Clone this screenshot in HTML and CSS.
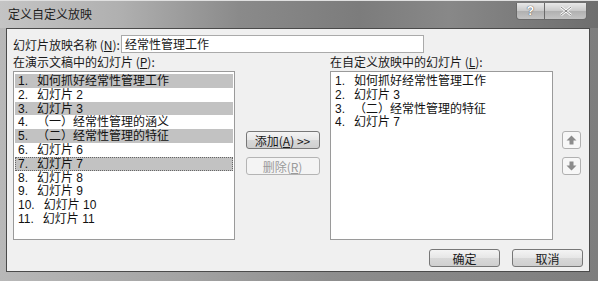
FILE: index.html
```html
<!DOCTYPE html>
<html lang="zh-CN">
<head>
    <meta charset="UTF-8">
    <title>定义自定义放映</title>
    <link rel="stylesheet" href="styles.css">
</head>
<body>
    <div class="window">
        <div class="titlebar">
            <span class="title">定义自定义放映</span>
            <div class="caption-btns">
                <span class="cap-btn help">?</span>
                <span class="cap-btn close">
                    <svg width="12" height="10" viewBox="0 0 12 10"><path d="M1 1 L11 9 M11 1 L1 9" stroke="#fff" stroke-width="2.4"/><path d="M1 1 L11 9 M11 1 L1 9" stroke="#6a6a6a" stroke-width="0.8"/></svg>
                </span>
            </div>
        </div>
        <div class="dialog">
            <div class="name-row">
                <label>幻灯片放映名称 (<u>N</u>):</label>
                <div class="textbox">经常性管理工作</div>
            </div>
            <div class="lists">
                <div class="col">
                    <div class="col-label">在演示文稿中的幻灯片 (<u>P</u>):</div>
                    <ul class="listbox left-list">
                        <li class="sel"><span class="num">1.</span>如何抓好经常性管理工作</li>
                        <li><span class="num">2.</span>幻灯片 2</li>
                        <li class="sel"><span class="num">3.</span>幻灯片 3</li>
                        <li><span class="num">4.</span>（一）经常性管理的涵义</li>
                        <li class="sel"><span class="num">5.</span>（二）经常性管理的特征</li>
                        <li><span class="num">6.</span>幻灯片 6</li>
                        <li class="sel focus"><span class="num">7.</span>幻灯片 7</li>
                        <li><span class="num">8.</span>幻灯片 8</li>
                        <li><span class="num">9.</span>幻灯片 9</li>
                        <li><span class="num">10.</span>幻灯片 10</li>
                        <li><span class="num">11.</span>幻灯片 11</li>
                    </ul>
                </div>
                <div class="mid-btns">
                    <button class="btn add">添加(<u>A</u>) &gt;&gt;</button>
                    <button class="btn remove" disabled>删除(<u>R</u>)</button>
                </div>
                <div class="col">
                    <div class="col-label">在自定义放映中的幻灯片 (<u>L</u>):</div>
                    <ul class="listbox right-list">
                        <li><span class="num">1.</span>如何抓好经常性管理工作</li>
                        <li><span class="num">2.</span>幻灯片 3</li>
                        <li><span class="num">3.</span>（二）经常性管理的特征</li>
                        <li><span class="num">4.</span>幻灯片 7</li>
                    </ul>
                </div>
                <div class="arrow-btns">
                    <span class="arrow-btn">
                        <svg width="11" height="10" viewBox="0 0 11 10"><path d="M5.5 0.5 L10.5 5.5 L7.5 5.5 L7.5 9.5 L3.5 9.5 L3.5 5.5 L0.5 5.5 Z" fill="#8c8c8c"/></svg>
                    </span>
                    <span class="arrow-btn">
                        <svg width="11" height="10" viewBox="0 0 11 10"><path d="M5.5 9.5 L10.5 4.5 L7.5 4.5 L7.5 0.5 L3.5 0.5 L3.5 4.5 L0.5 4.5 Z" fill="#8c8c8c"/></svg>
                    </span>
                </div>
            </div>
            <div class="footer">
                <button class="btn">确定</button>
                <button class="btn">取消</button>
            </div>
        </div>
    </div>
</body>
</html>
```

FILE: styles.css
```css
* {
    margin: 0;
    padding: 0;
    box-sizing: border-box;
}

body {
    background-color: #8a8a8a;
    font-family: 'Liberation Sans', 'Noto Sans CJK SC', sans-serif;
    font-size: 12px;
    color: #1a1a1a;
    width: 598px;
    height: 281px;
    overflow: hidden;
}

.window {
    width: 598px;
    height: 281px;
    padding: 0 8px 9px 6px;
    background: linear-gradient(90deg, #b8b8b8 0%, #a4a4a4 30%, #8e8e8e 55%, #7e7e7e 100%);
    border-top: 1px solid #e0e0e0;
    display: flex;
    flex-direction: column;
}

.titlebar {
    height: 27px;
    display: flex;
    align-items: flex-start;
    justify-content: space-between;
    background: linear-gradient(90deg, #c4c4c4 0%, #b0b0b0 20%, #8a8a8a 40%, #7c7c7c 60%, #888 75%, #6e6e6e 100%);
    margin: 0 -8px 0 -6px;
    padding: 0 11px 0 8px;
}

.title {
    font-family: 'Noto Sans CJK SC', sans-serif;
    font-size: 12px;
    line-height: 26px;
    color: #1e1e1e;
}

.caption-btns {
    display: flex;
    margin-top: 2px;
    border: 1px solid #6a6a6a;
    border-top: none;
    border-radius: 0 0 4px 4px;
    overflow: hidden;
}

.cap-btn {
    height: 16px;
    display: flex;
    align-items: center;
    justify-content: center;
    background: linear-gradient(#e8e8e8, #c8c8c8 50%, #b0b0b0 51%, #c4c4c4);
}

.help {
    width: 28px;
    border-right: 1px solid #6a6a6a;
    font-family: 'Liberation Sans', sans-serif;
    font-weight: bold;
    font-size: 12px;
    color: #fff;
    text-shadow: 0 0 1px #555, 0 0 1px #555;
}

.close {
    width: 41px;
}

.dialog {
    flex: 1;
    background-color: #f0f0f0;
    border: 1px solid #4a4a4a;
    display: flex;
    flex-direction: column;
    padding: 6px 0 0 6px;
}

u {
    text-decoration: underline;
}

.name-row {
    display: flex;
    align-items: center;
    height: 18px;
}

.name-row label {
    width: 108px;
    font-family: 'Noto Sans CJK SC', sans-serif;
}

.textbox {
    width: 303px;
    height: 18px;
    background: #fff;
    border: 1px solid #aaa;
    padding-left: 3px;
    line-height: 16px;
    font-family: 'Noto Sans CJK SC', sans-serif;
}

.lists {
    display: flex;
    margin-top: 1px;
}

.col-label {
    font-family: 'Noto Sans CJK SC', sans-serif;
    height: 17px;
    line-height: 16px;
}

.listbox {
    list-style: none;
    background: #fff;
    border: 1px solid #9a9a9a;
    padding: 2px 1px;
    height: 169px;
    font-family: 'Liberation Sans', 'Noto Sans CJK SC', sans-serif;
}

.left-list {
    width: 222px;
}

.right-list {
    width: 223px;
}

.listbox li {
    height: 13.8px;
    line-height: 14px;
    padding-left: 3px;
    white-space: nowrap;
    color: #111;
}

.listbox li.sel {
    background-color: #c2c2c2;
}

.listbox li.focus {
    outline: 1px dotted #666;
    outline-offset: -1px;
}

.num {
    display: inline-block;
    margin-right: 9px;
}

.mid-btns {
    width: 95px;
    display: flex;
    flex-direction: column;
    align-items: center;
    padding-top: 77px;
    gap: 8px;
}

.btn {
    font-family: 'Noto Sans CJK SC', sans-serif;
    font-size: 12px;
    color: #1a1a1a;
    height: 18px;
    border: 1px solid #777;
    border-radius: 3px;
    background: linear-gradient(#f4f4f4, #e6e6e6 50%, #d8d8d8 51%, #cfcfcf);
    line-height: 15px;
}

.btn.add {
    width: 74px;
}

.btn.remove {
    width: 74px;
    color: #9a9a9a;
    border-color: #b4b4b4;
    background: #f4f4f4;
}

.arrow-btns {
    display: flex;
    flex-direction: column;
    padding: 77px 0 0 9px;
    gap: 8px;
}

.arrow-btn {
    width: 19px;
    height: 18px;
    border: 1px solid #b0b0b0;
    border-radius: 3px;
    background: #f7f7f7;
    display: flex;
    align-items: center;
    justify-content: center;
}

.footer {
    display: flex;
    justify-content: flex-end;
    gap: 12px;
    padding: 9px 6px 0 0;
}

.footer .btn {
    width: 71px;
}
```
